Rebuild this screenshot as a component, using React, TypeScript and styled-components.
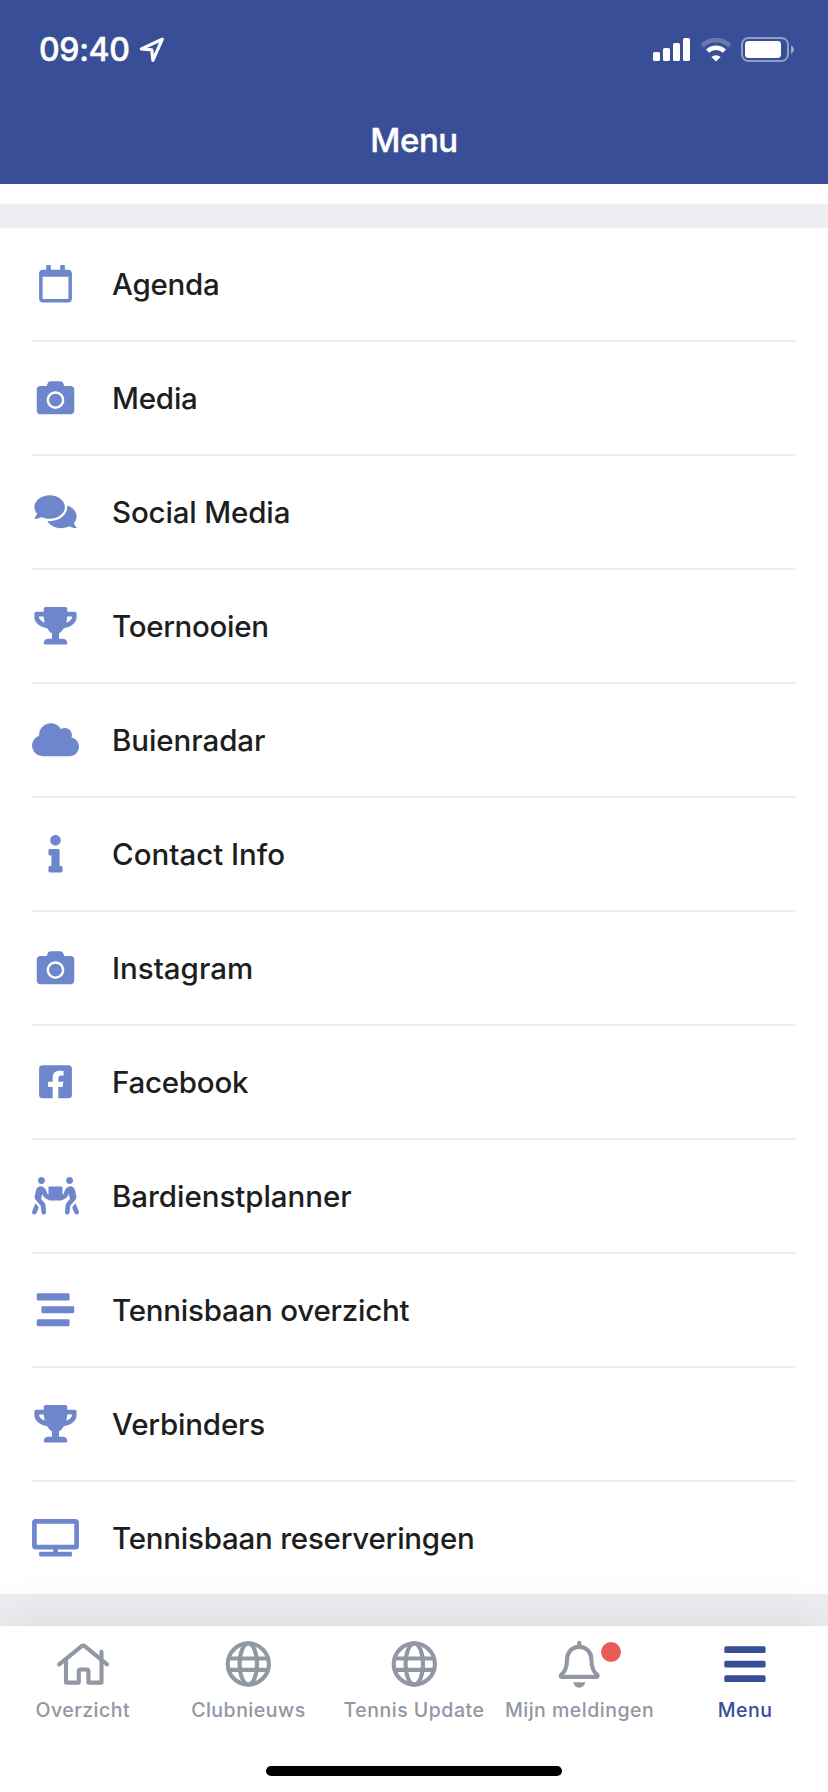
import React from 'react';
import styled, { createGlobalStyle } from 'styled-components';
import type { IconType } from 'react-icons';
import {
  FaCamera,
  FaCloud,
  FaComments,
  FaFacebookSquare,
  FaInfo,
  FaPeopleCarry,
  FaRegCalendar,
  FaStream,
  FaTrophy,
  FaTv,
} from 'react-icons/fa';

const color = {
  brand: '#384e96',
  icon: '#6e86cc',
  text: '#1d1e20',
  muted: '#9197a3',
  band: '#edeef2',
  line: '#eeeeef',
  alert: '#e95b57',
};

const GlobalStyle = createGlobalStyle`
  *, *::before, *::after { box-sizing: border-box; }
  body {
    margin: 0;
    background: #fff;
    font-family: Inter, "Liberation Sans", sans-serif;
    -webkit-font-smoothing: antialiased;
  }
`;

const Screen = styled.div`
  display: flex;
  flex-direction: column;
  width: 828px;
  height: 1792px;
  overflow: hidden;
  background: #fff;
`;

const Header = styled.header`
  flex: none;
  height: 184px;
  display: flex;
  flex-direction: column;
  background: ${color.brand};
  color: #fff;
`;

const StatusBar = styled.div`
  height: 96px;
  padding: 3px 34px 0 39px;
  display: flex;
  align-items: center;
  justify-content: space-between;
`;

const StatusGroup = styled.div<{ $gap: number }>`
  display: flex;
  align-items: center;
  gap: ${(p) => p.$gap}px;
`;

const Clock = styled.span`
  padding-top: 1px;
  font-size: 32px;
  line-height: 40px;
  font-weight: 500;
  letter-spacing: -0.3px;
  -webkit-text-stroke: 0.5px currentColor;
`;

const Title = styled.h1`
  margin: 0;
  height: 88px;
  display: flex;
  align-items: center;
  justify-content: center;
  font-size: 33px;
  font-weight: 500;
  letter-spacing: -0.4px;
  -webkit-text-stroke: 0.4px currentColor;
`;

const Band = styled.div<{ $grow?: boolean }>`
  flex: ${(p) => (p.$grow ? '1' : '0 0 24px')};
  background: ${color.band};
`;

const List = styled.ul`
  flex: none;
  margin: 0;
  padding: 0 32px;
  list-style: none;
`;

const Row = styled.li`
  height: 114px;
  display: flex;
  align-items: center;
  gap: 33px;
  border-bottom: 2px solid ${color.line};

  &:last-child {
    height: 112px;
    border-bottom: 0;
  }
`;

const RowIcon = styled.span`
  flex: none;
  display: flex;
  color: ${color.icon};

  svg {
    width: 47px;
    height: 37.5px;
  }
`;

const RowLabel = styled.span<{ $tracking: number }>`
  font-size: 29.5px;
  line-height: 40px;
  font-weight: 500;
  letter-spacing: ${(p) => p.$tracking}px;
  color: ${color.text};
  white-space: nowrap;
`;

const Spacer = styled.div`
  flex: none;
  height: 20px;
`;

const TabBar = styled.nav`
  flex: none;
  height: 166px;
  display: flex;
  flex-direction: column;
  align-items: center;
  justify-content: space-between;
  padding: 13px 0 16px;
  background: #fff;
  box-shadow: 0 0 60px rgba(0, 0, 0, 0.1);
`;

const Tabs = styled.div`
  width: 100%;
  display: grid;
  grid-template-columns: repeat(5, 1fr);
`;

const Tab = styled.a<{ $active?: boolean }>`
  display: flex;
  flex-direction: column;
  align-items: center;
  gap: 7px;
  color: ${(p) => (p.$active ? color.brand : color.muted)};
`;

const TabIcon = styled.span`
  position: relative;
  display: flex;
`;

const Badge = styled.span`
  position: absolute;
  top: 3px;
  left: 49px;
  width: 20px;
  height: 20px;
  border-radius: 50%;
  background: ${color.alert};
`;

const TabLabel = styled.span`
  font-size: 19.5px;
  line-height: 28px;
  font-weight: 500;
  letter-spacing: 0.5px;
  white-space: nowrap;
`;

const HomeIndicator = styled.div`
  width: 296px;
  height: 10px;
  border-radius: 5px;
  background: #000;
`;

const LocationArrow = () => (
  <svg width="26" height="26" viewBox="0 0 26 26" fill="none" stroke="#fff" strokeWidth="3.2" strokeLinejoin="round">
    <path d="M23.3 2.2 2.4 11.9l10.4 1 1.1 10.4z" />
  </svg>
);

const Signal = () => (
  <svg width="37" height="23" viewBox="0 0 37 23" fill="#fff">
    <rect x="0" y="14" width="7" height="9" rx="1.6" />
    <rect x="10" y="10" width="7" height="13" rx="1.6" />
    <rect x="20" y="5" width="7" height="18" rx="1.6" />
    <rect x="30" y="0" width="7" height="23" rx="1.6" />
  </svg>
);

const Wifi = () => (
  <svg width="32" height="24" viewBox="0 0 32 24">
    <path d="M2.2 7.8a19.6 19.6 0 0 1 27.6 0" fill="none" stroke="#fff" strokeOpacity="0.25" strokeWidth="4.6" />
    <path d="M7.6 13.2a12 12 0 0 1 16.8 0" fill="none" stroke="#fff" strokeWidth="4.6" />
    <path d="M16 23.6l-4.6-4.6a6.6 6.6 0 0 1 9.2 0z" fill="#fff" />
  </svg>
);

const Battery = () => (
  <svg width="53" height="25" viewBox="0 0 53 25">
    <rect x="1" y="1" width="46" height="23" rx="6.5" fill="none" stroke="#fff" strokeOpacity="0.45" strokeWidth="2" />
    <rect x="4" y="4" width="36" height="17" rx="3.4" fill="#fff" />
    <path d="M50 8.4c1.9.8 3 2.2 3 4.1s-1.1 3.3-3 4.1z" fill="#fff" fillOpacity="0.5" />
  </svg>
);

const TabSvg = ({ children }: { children: React.ReactNode }) => (
  <svg
    width="56"
    height="50"
    viewBox="0 0 56 50"
    fill="none"
    stroke="currentColor"
    strokeWidth="4.1"
    strokeLinecap="round"
    strokeLinejoin="round"
  >
    {children}
  </svg>
);

const HomeIcon = () => (
  <TabSvg>
    <path d="M4.2 25.4 26.7 7.2q1.5-1.2 3 0L52 25.4" />
    <path d="M11 22.2V43.6H23.8V32.2q0-1.7 1.7-1.7h6.2q1.7 0 1.7 1.7V43.6H46.5V12.8" />
  </TabSvg>
);

const GlobeIcon = () => (
  <TabSvg>
    <circle cx="28.3" cy="25" r="20.6" />
    <ellipse cx="28.3" cy="25" rx="8.7" ry="20.6" />
    <path d="M8.9 19.5h38.8M8.9 30.9h38.8" />
  </TabSvg>
);

const BellIcon = () => (
  <TabSvg>
    <path d="M27.2 3.8v3" />
    <path d="M27.2 7.9c-7.3 0-12.2 5.4-12.2 12.6 0 8.6-1.9 12.1-5.4 14.9-1.5 1.3-.9 2.5.4 2.5h34.4c1.3 0 1.9-1.2.4-2.5-3.5-2.8-5.4-6.3-5.4-14.9 0-7.2-4.9-12.6-12.2-12.6z" />
    <path d="M21.3 43.2h11.8a5.9 5.5 0 0 1-11.8 0z" fill="currentColor" stroke="none" />
  </TabSvg>
);

const MenuIcon = () => (
  <TabSvg>
    <g fill="currentColor" stroke="none">
      <rect x="7.3" y="7.3" width="41.3" height="6.8" rx="1.6" />
      <rect x="7.3" y="21.8" width="41.3" height="6.8" rx="1.6" />
      <rect x="7.3" y="36.3" width="41.3" height="6.8" rx="1.6" />
    </g>
  </TabSvg>
);

const items: { label: string; icon: IconType; tracking: number }[] = [
  { label: 'Agenda', icon: FaRegCalendar, tracking: -0.25 },
  { label: 'Media', icon: FaCamera, tracking: -0.2 },
  { label: 'Social Media', icon: FaComments, tracking: -0.15 },
  { label: 'Toernooien', icon: FaTrophy, tracking: -0.32 },
  { label: 'Buienradar', icon: FaCloud, tracking: -0.07 },
  { label: 'Contact Info', icon: FaInfo, tracking: 0 },
  { label: 'Instagram', icon: FaCamera, tracking: 0 },
  { label: 'Facebook', icon: FaFacebookSquare, tracking: -0.25 },
  { label: 'Bardienstplanner', icon: FaPeopleCarry, tracking: -0.04 },
  { label: 'Tennisbaan overzicht', icon: FaStream, tracking: -0.23 },
  { label: 'Verbinders', icon: FaTrophy, tracking: -0.18 },
  { label: 'Tennisbaan reserveringen', icon: FaTv, tracking: -0.23 },
];

const tabs: { label: string; icon: React.FC; badge?: boolean; active?: boolean }[] = [
  { label: 'Overzicht', icon: HomeIcon },
  { label: 'Clubnieuws', icon: GlobeIcon },
  { label: 'Tennis Update', icon: GlobeIcon },
  { label: 'Mijn meldingen', icon: BellIcon, badge: true },
  { label: 'Menu', icon: MenuIcon, active: true },
];

export default function App() {
  return (
    <>
      <GlobalStyle />
      <Screen>
        <Header>
          <StatusBar>
            <StatusGroup $gap={9}>
              <Clock>09:40</Clock>
              <LocationArrow />
            </StatusGroup>
            <StatusGroup $gap={9.5}>
              <Signal />
              <Wifi />
              <Battery />
            </StatusGroup>
          </StatusBar>
          <Title>Menu</Title>
        </Header>
        <Spacer />
        <Band />
        <List>
          {items.map(({ label, icon: Icon, tracking }) => (
            <Row key={label}>
              <RowIcon>
                <Icon />
              </RowIcon>
              <RowLabel $tracking={tracking}>{label}</RowLabel>
            </Row>
          ))}
        </List>
        <Band $grow />
        <TabBar>
          <Tabs>
            {tabs.map(({ label, icon: Icon, badge, active }) => (
              <Tab key={label} $active={active}>
                <TabIcon>
                  <Icon />
                  {badge && <Badge />}
                </TabIcon>
                <TabLabel>{label}</TabLabel>
              </Tab>
            ))}
          </Tabs>
          <HomeIndicator />
        </TabBar>
      </Screen>
    </>
  );
}
